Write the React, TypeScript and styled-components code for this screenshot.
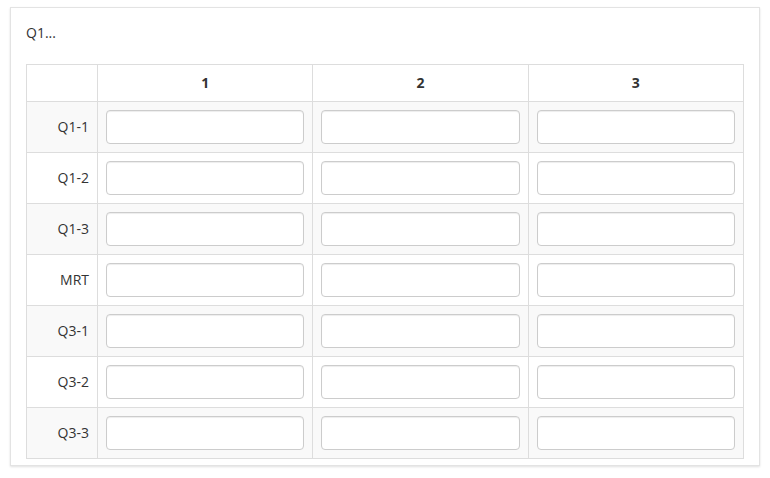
import React from 'react';
import styled, { createGlobalStyle } from 'styled-components';

const GlobalStyle = createGlobalStyle`
  html, body {
    margin: 0;
    padding: 0;
    background: #ffffff;
  }
  body {
    font-family: "Open Sans", "Liberation Sans", Arial, sans-serif;
    font-size: 14px;
    line-height: 20px;
    color: #333333;
  }
  * {
    box-sizing: border-box;
  }
`;

const Page = styled.div`
  padding: 7px 10px;
`;

const Panel = styled.div`
  width: 750px;
  background: #ffffff;
  border: 1px solid #e3e3e3;
  box-shadow: 0 1px 2px rgba(0, 0, 0, 0.12);
  padding: 15px 15px 6px;
`;

const Title = styled.div`
  margin: 0 0 21px;
  line-height: 20px;
`;

const Table = styled.table`
  width: 100%;
  border-collapse: collapse;
  border: 1px solid #dddddd;
`;

const HeadCell = styled.th<{ $narrow?: boolean }>`
  border: 1px solid #dddddd;
  padding: 8px;
  font-weight: 700;
  text-align: center;
  line-height: 20px;
  background: #ffffff;
  width: ${(p) => (p.$narrow ? '71px' : 'auto')};
`;

const Row = styled.tr<{ $striped: boolean }>`
  background: ${(p) => (p.$striped ? '#f9f9f9' : '#ffffff')};
`;

const LabelCell = styled.td`
  border: 1px solid #dddddd;
  padding: 8px;
  text-align: right;
  vertical-align: middle;
  line-height: 20px;
`;

const Cell = styled.td`
  border: 1px solid #dddddd;
  padding: 8px;
  vertical-align: middle;
`;

const Input = styled.input`
  display: block;
  width: 100%;
  height: 34px;
  padding: 6px 12px;
  font-family: inherit;
  font-size: 14px;
  color: #555555;
  background: #ffffff;
  border: 1px solid #cccccc;
  border-radius: 4px;
  box-shadow: inset 0 1px 1px rgba(0, 0, 0, 0.075);
  outline: none;
`;

const columns = ['1', '2', '3'];
const rows = ['Q1-1', 'Q1-2', 'Q1-3', 'MRT', 'Q3-1', 'Q3-2', 'Q3-3'];

export default function App() {
  return (
    <>
      <GlobalStyle />
      <Page>
        <Panel>
          <Title>Q1...</Title>
          <Table>
            <thead>
              <tr>
                <HeadCell $narrow />
                {columns.map((c) => (
                  <HeadCell key={c}>{c}</HeadCell>
                ))}
              </tr>
            </thead>
            <tbody>
              {rows.map((r, i) => (
                <Row key={r} $striped={i % 2 === 0}>
                  <LabelCell>{r}</LabelCell>
                  {columns.map((c) => (
                    <Cell key={c}>
                      <Input type="text" />
                    </Cell>
                  ))}
                </Row>
              ))}
            </tbody>
          </Table>
        </Panel>
      </Page>
    </>
  );
}
